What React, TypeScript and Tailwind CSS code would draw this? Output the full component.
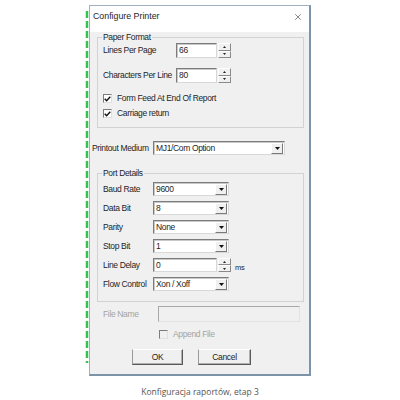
import { X } from 'lucide-react'

const ui = "font-['Liberation_Sans',Arial,sans-serif] text-[8.5px] tracking-[-0.35px] text-[#1e1e1e]"

function Sunken({ className = '', children }: { className?: string; children?: React.ReactNode }) {
  return (
    <div
      className={`flex items-center bg-white border border-t-[#7c7c7c] border-l-[#7c7c7c] border-b-[#d8d8d8] border-r-[#d8d8d8] shadow-[inset_1px_1px_0_#c8c8c8] ${className}`}
    >
      {children}
    </div>
  )
}

function Arrow() {
  return (
    <svg width="5" height="3" viewBox="0 0 5 3">
      <path d="M0 0 L5 0 L2.5 3 Z" fill="#111" />
    </svg>
  )
}

function Spinner() {
  return (
    <div className="ml-[1px] w-[13px] h-full flex flex-col">
      <div className="flex-1 grid place-items-center bg-[#f0f0f0] border border-t-white border-l-white border-b-[#8a8a8a] border-r-[#8a8a8a]">
        <svg width="3" height="2" viewBox="0 0 3 2"><path d="M0 2 L1.5 0 L3 2 Z" fill="#222" /></svg>
      </div>
      <div className="flex-1 grid place-items-center bg-[#f0f0f0] border border-t-white border-l-white border-b-[#8a8a8a] border-r-[#8a8a8a]">
        <svg width="3" height="2" viewBox="0 0 3 2"><path d="M0 0 L3 0 L1.5 2 Z" fill="#222" /></svg>
      </div>
    </div>
  )
}

function Select({ value, width }: { value: string; width: string }) {
  return (
    <Sunken className={`${width} h-full pl-[2px] pr-[1px]`}>
      <span className="flex-1 truncate">{value}</span>
      <div className="w-[12px] h-[11px] grid place-items-center bg-[#f0f0f0] border border-t-white border-l-white border-b-[#7a7a7a] border-r-[#7a7a7a]">
        <Arrow />
      </div>
    </Sunken>
  )
}

function Check({ checked, disabled = false }: { checked: boolean; disabled?: boolean }) {
  return (
    <div
      className={`w-[9px] h-[9px] grid place-items-center border border-t-[#7c7c7c] border-l-[#7c7c7c] border-b-[#e0e0e0] border-r-[#e0e0e0] ${disabled ? 'bg-[#f0f0f0]' : 'bg-white'}`}
    >
      {checked && (
        <svg width="7" height="6" viewBox="0 0 7 6">
          <path d="M0.7 2.8 L2.6 4.8 L6.3 0.8" stroke="#111" strokeWidth="1.4" fill="none" />
        </svg>
      )}
    </div>
  )
}

function Button({ label, width }: { label: string; width: string }) {
  return (
    <div
      className={`${width} h-[16px] grid place-items-center bg-[#f0f0f0] border border-t-white border-l-[#9a9a9a] border-b-[#5a5a5a] border-r-[#5a5a5a] shadow-[inset_-1px_-1px_0_#b0b0b0]`}
    >
      {label}
    </div>
  )
}

const portRows = [
  { label: 'Baud Rate', value: '9600' },
  { label: 'Data Bit', value: '8' },
  { label: 'Parity', value: 'None' },
  { label: 'Stop Bit', value: '1' },
]

export default function App() {
  return (
    <div className="w-[400px] h-[400px] bg-white overflow-hidden">
      <div className="flex items-start pl-[85px] pt-[5px]">
        <svg width="4" height="352" className="shrink-0 mt-[6px]">
          <line x1="2" y1="0" x2="2" y2="352" stroke="#35c154" strokeWidth="2.5" strokeDasharray="7 3" />
        </svg>

        <div className={`w-[222px] border border-[#9eb0c2] border-r-2 border-b-2 border-r-[#7d93a8] border-b-[#7d93a8] ${ui}`}>
          <div className="h-[21px] bg-white flex items-center justify-between pl-[3px] pr-[6px]">
            <span className="text-[8.8px] tracking-normal">Configure Printer</span>
            <X size={10} strokeWidth={1.3} className="text-[#222]" />
          </div>

          <div className="bg-[#f0f0f0] pb-[9px]">
            <fieldset className="mt-[5px] ml-[7px] mr-[5px] border border-[#d2d2d2] px-[5px] pb-[8px]">
              <legend className="leading-[10px] px-[1px] -ml-[1px]">Paper Format</legend>
              <div className="flex items-center h-[15px] mt-[1px]">
                <span className="w-[73px]">Lines Per Page</span>
                <Sunken className="w-[41px] h-full pl-[2px]">66</Sunken>
                <Spinner />
              </div>
              <div className="flex items-center h-[15px] mt-[10px]">
                <span className="w-[73px]">Characters Per Line</span>
                <Sunken className="w-[41px] h-full pl-[2px]">80</Sunken>
                <Spinner />
              </div>
              <div className="flex items-center gap-[5px] h-[11px] mt-[10px]">
                <Check checked />
                <span>Form Feed At End Of Report</span>
              </div>
              <div className="flex items-center gap-[5px] h-[11px] mt-[4px]">
                <Check checked />
                <span>Carriage return</span>
              </div>
            </fieldset>

            <div className="flex items-center h-[14px] mt-[13px] pl-[2px]">
              <span className="w-[61px]">Printout Medium</span>
              <Select value="MJ1/Com Option" width="w-[132px]" />
            </div>

            <fieldset className="mt-[13px] ml-[7px] mr-[5px] border border-[#d2d2d2] px-[5px] pb-[10px]">
              <legend className="leading-[10px] px-[1px] -ml-[1px]">Port Details</legend>
              <div className="flex flex-col gap-[5px] pt-[4px]">
                {portRows.map(r => (
                  <div key={r.label} className="flex items-center h-[14px]">
                    <span className="w-[50px]">{r.label}</span>
                    <Select value={r.value} width="w-[76px]" />
                  </div>
                ))}
                <div className="flex items-center h-[14px]">
                  <span className="w-[50px]">Line Delay</span>
                  <Sunken className="w-[64px] h-full pl-[2px]">0</Sunken>
                  <Spinner />
                  <span className="ml-[4px] self-end leading-[8px] text-[7.5px]">ms</span>
                </div>
                <div className="flex items-center h-[14px]">
                  <span className="w-[50px]">Flow Control</span>
                  <Select value="Xon / Xoff" width="w-[76px]" />
                </div>
              </div>
            </fieldset>

            <div className="flex items-center h-[16px] mt-[4px] pl-[13px] text-[#a3a3a3]">
              <span className="w-[55px]">File Name</span>
              <div className="w-[142px] h-full bg-[#f0f0f0] border border-t-[#a8a8a8] border-l-[#a8a8a8] border-b-[#e2e2e2] border-r-[#e2e2e2]" />
            </div>

            <div className="flex items-center gap-[5px] h-[10px] mt-[7px] pl-[69px] text-[#a3a3a3]">
              <Check checked={false} disabled />
              <span>Append File</span>
            </div>

            <div className="flex gap-[15px] mt-[10px] pl-[42px]">
              <Button label="OK" width="w-[51px]" />
              <Button label="Cancel" width="w-[53px]" />
            </div>
          </div>
        </div>
      </div>

      <p className="mt-[10px] text-center font-['Open_Sans',sans-serif] text-[8.5px] text-[#555]">
        Konfiguracja raportów, etap 3
      </p>
    </div>
  )
}
